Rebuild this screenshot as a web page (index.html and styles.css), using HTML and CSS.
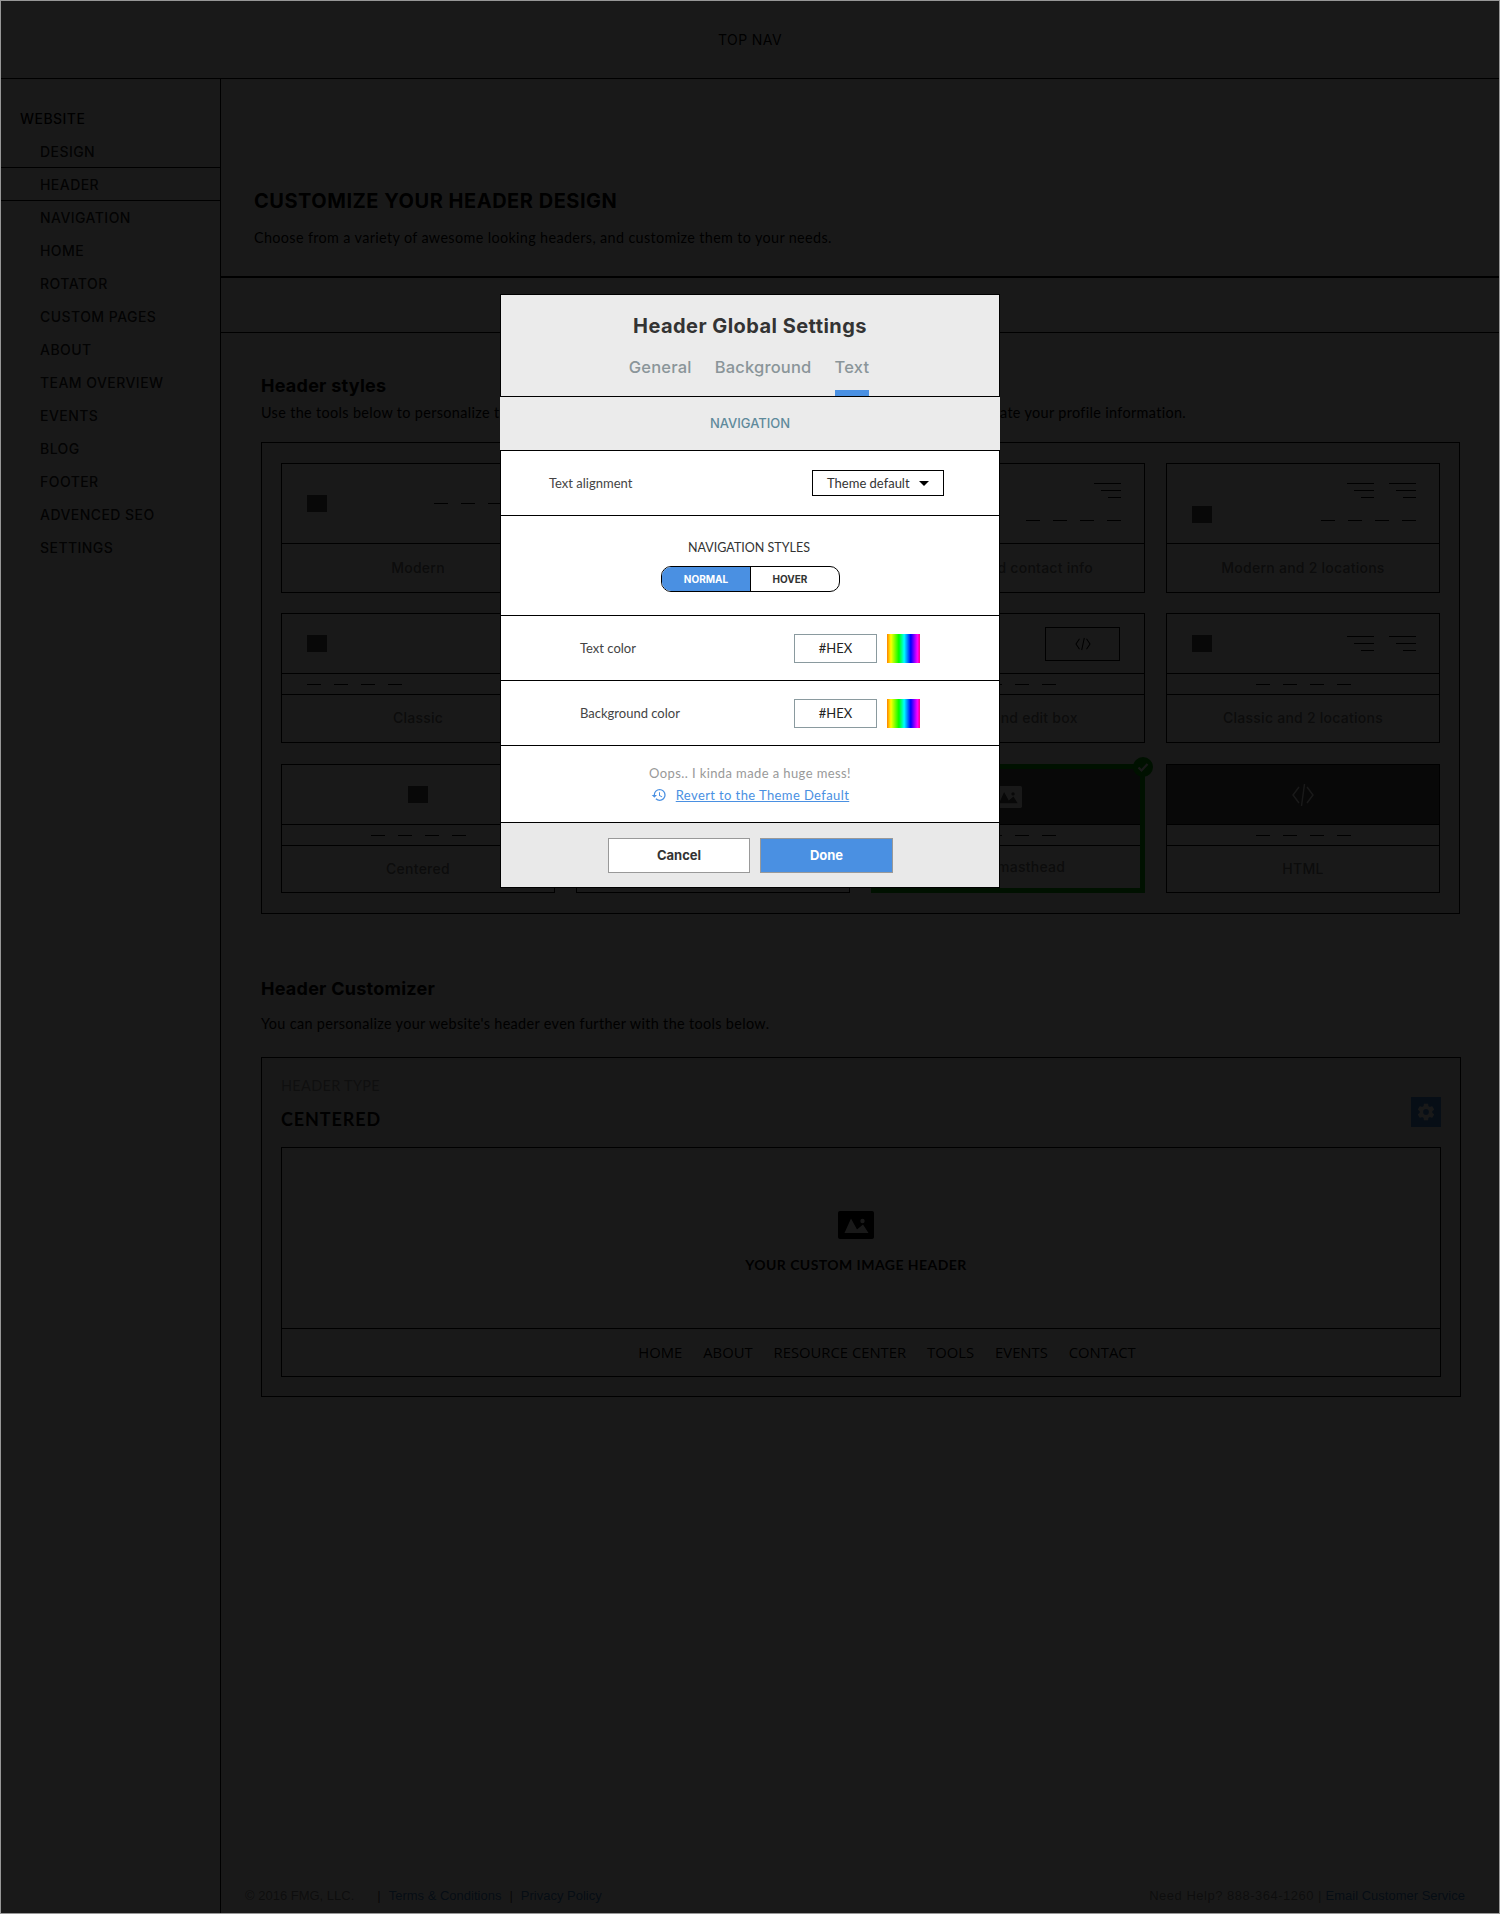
FILE: index.html
```html
<!DOCTYPE html>
<html lang="en">
<head>
<meta charset="utf-8">
<title>Header Global Settings</title>
<link rel="stylesheet" href="styles.css">
</head>
<body>
<header class="topnav">TOP NAV</header>
<div class="layout">
  <nav class="sidebar">
    <div class="side-item side-root">WEBSITE</div>
    <div class="side-item">DESIGN</div>
    <div class="side-item active">HEADER</div>
    <div class="side-item">NAVIGATION</div>
    <div class="side-item">HOME</div>
    <div class="side-item">ROTATOR</div>
    <div class="side-item">CUSTOM PAGES</div>
    <div class="side-item">ABOUT</div>
    <div class="side-item">TEAM OVERVIEW</div>
    <div class="side-item">EVENTS</div>
    <div class="side-item">BLOG</div>
    <div class="side-item">FOOTER</div>
    <div class="side-item">ADVENCED SEO</div>
    <div class="side-item">SETTINGS</div>
  </nav>
  <main class="main">
    <section class="page-head">
      <h1>CUSTOMIZE YOUR HEADER DESIGN</h1>
      <p>Choose from a variety of awesome looking headers, and customize them to your needs.</p>
    </section>
    <div class="subbar"></div>
    <section class="panel panel-styles">
      <h2>Header styles</h2>
      <p class="panel-sub">Use the tools below to personalize the look and feel of your website's header and navigation, and then fully update your profile information.</p>
      <div class="style-box">
        <div class="style-grid">
          <div class="card">
            <div class="thumb tall row-between"><span class="logo"></span><span class="dashes"><i></i><i></i><i></i><i></i></span></div>
            <div class="label">Modern</div>
          </div>
          <div class="card">
            <div class="thumb tall row-between"><span class="logo"></span><span class="dashes"><i></i><i></i><i></i><i></i></span></div>
            <div class="label">Modern and edit box</div>
          </div>
          <div class="card">
            <div class="thumb tall stacked">
              <div class="stack-top"><span class="lines"><i></i><i></i><i></i></span></div>
              <div class="stack-bottom"><span class="logo"></span><span class="dashes"><i></i><i></i><i></i><i></i></span></div>
            </div>
            <div class="label">Modern and contact info</div>
          </div>
          <div class="card">
            <div class="thumb tall stacked">
              <div class="stack-top"><span class="lines"><i></i><i></i><i></i></span><span class="lines"><i></i><i></i><i></i></span></div>
              <div class="stack-bottom"><span class="logo"></span><span class="dashes"><i></i><i></i><i></i><i></i></span></div>
            </div>
            <div class="label">Modern and 2 locations</div>
          </div>

          <div class="card">
            <div class="thumb row-between"><span class="logo"></span></div>
            <div class="strip strip-left"><span class="dashes"><i></i><i></i><i></i><i></i></span></div>
            <div class="label">Classic</div>
          </div>
          <div class="card">
            <div class="thumb row-between"><span class="logo"></span><span class="lines"><i></i><i></i><i></i></span></div>
            <div class="strip"><span class="dashes"><i></i><i></i><i></i><i></i></span></div>
            <div class="label">Classic and contact info</div>
          </div>
          <div class="card">
            <div class="thumb row-between">
              <span class="logo"></span>
              <span class="edit-box"><svg class="code-icon" viewBox="0 0 18 16"><path d="M5 2 1 8l4 6M13 2l4 6-4 6M10.500 1 7.500 15"/></svg></span>
            </div>
            <div class="strip"><span class="dashes"><i></i><i></i><i></i><i></i></span></div>
            <div class="label">Classic and edit box</div>
          </div>
          <div class="card">
            <div class="thumb row-between"><span class="logo"></span><span class="loc-pair"><span class="lines"><i></i><i></i><i></i></span><span class="lines"><i></i><i></i><i></i></span></span></div>
            <div class="strip"><span class="dashes"><i></i><i></i><i></i><i></i></span></div>
            <div class="label">Classic and 2 locations</div>
          </div>

          <div class="card card-r3">
            <div class="thumb thumb-center"><span class="logo"></span></div>
            <div class="strip"><span class="dashes"><i></i><i></i><i></i><i></i></span></div>
            <div class="label">Centered</div>
          </div>
          <div class="card card-r3">
            <div class="thumb thumb-center"><span class="logo"></span></div>
            <div class="strip"><span class="dashes"><i></i><i></i><i></i><i></i></span></div>
            <div class="label">Centered and contact info</div>
          </div>
          <div class="card card-r3 selected">
            <div class="thumb thumb-center thumb-dark">
              <svg class="img-icon img-icon-small" viewBox="0 0 36 28"><path class="img-bg" d="M2 0h32a2 2 0 0 1 2 2v24a2 2 0 0 1-2 2H2a2 2 0 0 1-2-2V2a2 2 0 0 1 2-2z"/><path class="img-fg" d="M6.500 22 13 7.500l6 11 6-5 5.500 8.500z"/><circle class="img-fg" cx="24.500" cy="10" r="2.200"/></svg>
            </div>
            <div class="strip"><span class="dashes"><i></i><i></i><i></i><i></i></span></div>
            <div class="label">Image masthead</div>
            <span class="badge"><svg viewBox="0 0 20 20"><path d="m5.500 10.500 3 3 6-6.500"/></svg></span>
          </div>
          <div class="card card-r3">
            <div class="thumb thumb-center thumb-dark">
              <svg class="code-icon code-icon-big" viewBox="0 0 22 24"><path d="M7 4 1 12l6 8M15 4l6 8-6 8M12.500 1 9.500 23"/></svg>
            </div>
            <div class="strip"><span class="dashes"><i></i><i></i><i></i><i></i></span></div>
            <div class="label">HTML</div>
          </div>
        </div>
      </div>
    </section>

    <section class="panel panel-custom">
      <h2>Header Customizer</h2>
      <p class="panel-sub panel-sub-gap">You can personalize your website's header even further with the tools below.</p>
      <div class="custom-box">
        <div class="custom-head">
          <div>
            <div class="type-label">HEADER TYPE</div>
            <div class="type-name">CENTERED</div>
          </div>
          <span class="gear-btn"><svg viewBox="0 0 24 24"><path d="M19.430 12.980c.04-.32.070-.64.070-.98s-.03-.66-.07-.98l2.110-1.650c.19-.15.240-.42.120-.64l-2-3.460c-.12-.22-.39-.3-.61-.22l-2.490 1c-.52-.4-1.080-.73-1.690-.98l-.38-2.650A.488.488 0 0 0 14 2h-4c-.25 0-.46.18-.49.420l-.38 2.650c-.61.25-1.170.59-1.690.98l-2.490-1c-.23-.09-.49 0-.61.220l-2 3.460c-.13.220-.07.49.120.64l2.110 1.650c-.04.32-.07.65-.07.980s.03.66.07.980l-2.110 1.650c-.19.150-.24.420-.12.640l2 3.460c.12.220.39.300.61.220l2.490-1c.52.400 1.080.730 1.690.980l.38 2.650c.03.240.24.420.49.420h4c.25 0 .46-.18.49-.42l.38-2.650c.61-.25 1.170-.59 1.690-.98l2.490 1c.23.090.49 0 .61-.22l2-3.460c.12-.22.070-.49-.12-.64l-2.110-1.650zM12 15.500a3.500 3.500 0 1 1 0-7 3.500 3.500 0 0 1 0 7z"/></svg></span>
        </div>
        <div class="preview">
          <div class="preview-image">
            <svg class="img-icon" viewBox="0 0 36 28"><path class="img-bg" d="M2 0h32a2 2 0 0 1 2 2v24a2 2 0 0 1-2 2H2a2 2 0 0 1-2-2V2a2 2 0 0 1 2-2z"/><path class="img-fg" d="M6.500 22 13 7.500l6 11 6-5 5.500 8.500z"/><circle class="img-fg" cx="24.500" cy="10" r="2.200"/></svg>
            <div class="preview-title">YOUR CUSTOM IMAGE HEADER</div>
          </div>
          <div class="preview-nav">
            <span>HOME</span><span>ABOUT</span><span>RESOURCE CENTER</span><span>TOOLS</span><span>EVENTS</span><span>CONTACT</span>
          </div>
        </div>
      </div>
    </section>

    <footer class="page-foot">
      <div class="foot-left"><span class="copy">© 2016 FMG, LLC.</span><span class="sep">|</span><a>Terms &amp; Conditions</a><span class="sep">|</span><a>Privacy Policy</a></div>
      <div class="foot-right"><span class="copy help">Need Help? 888-364-1260 |</span> <a>Email Customer Service</a></div>
    </footer>
  </main>
</div>

<div class="overlay"></div>

<div class="modal">
  <div class="m-head">
    <div class="m-title">Header Global Settings</div>
    <div class="m-tabs">
      <span class="m-tab">General</span>
      <span class="m-tab">Background</span>
      <span class="m-tab is-active">Text</span>
    </div>
  </div>
  <div class="m-section">NAVIGATION</div>
  <div class="m-row m-align">
    <span class="m-label">Text alignment</span>
    <span class="m-select">Theme default<i class="caret"></i></span>
  </div>
  <div class="m-styles">
    <div class="m-styles-title">NAVIGATION STYLES</div>
    <div class="toggle"><span class="toggle-on">NORMAL</span><span class="toggle-off">HOVER</span></div>
  </div>
  <div class="m-row m-color">
    <span class="m-label">Text color</span>
    <span class="color-tools"><span class="hex">#HEX</span><span class="rainbow"></span></span>
  </div>
  <div class="m-row m-color">
    <span class="m-label">Background color</span>
    <span class="color-tools"><span class="hex">#HEX</span><span class="rainbow"></span></span>
  </div>
  <div class="m-revert">
    <div class="oops">Oops.. I kinda made a huge mess!</div>
    <div class="revert-line">
      <svg class="history" viewBox="0 0 24 24"><path d="M13 3a9 9 0 0 0-9 9H1l3.890 3.890.07.14L9 12H6c0-3.870 3.130-7 7-7s7 3.130 7 7-3.130 7-7 7c-1.930 0-3.680-.79-4.940-2.060l-1.420 1.420A8.954 8.954 0 0 0 13 21a9 9 0 0 0 0-18zm-1 5v5l4.280 2.540.72-1.210-3.500-2.080V8H12z"/></svg>
      <a class="revert-link">Revert to the Theme Default</a>
    </div>
  </div>
  <div class="m-foot">
    <span class="btn btn-cancel">Cancel</span>
    <span class="btn btn-done">Done</span>
  </div>
</div>
</body>
</html>
```

FILE: styles.css
```css
* { box-sizing: border-box; }
html, body { margin: 0; padding: 0; }
body {
  position: relative;
  width: 1500px;
  height: 1914px;
  background: #fff;
  font-family: "Lato", "Open Sans", sans-serif;
  color: #000;
  overflow: hidden;
}
body::after {
  content: "";
  position: absolute;
  inset: 0;
  border: 1px solid #979797;
  z-index: 5;
  pointer-events: none;
}

.overlay {
  position: absolute;
  inset: 0;
  background: rgba(0, 0, 0, 0.9);
  z-index: 2;
}

/* ---------- page below the overlay ---------- */
.topnav {
  height: 79px;
  padding-top: 1px;
  display: flex;
  align-items: center;
  justify-content: center;
  border-bottom: 1px solid #000;
  font: 400 14px/1 "Inter", sans-serif;
  letter-spacing: .4px;
}
.layout { display: flex; height: 1835px; }
.sidebar {
  width: 221px;
  flex: none;
  padding: 23px 0 0 1px;
  border-right: 1px solid #000;
  background: #fff;
}
.side-item {
  height: 33px;
  padding-left: 39px;
  padding-top: 1px;
  display: flex;
  align-items: center;
  font: 500 14px/1 "Inter", sans-serif;
  letter-spacing: .45px;
  color: #222;
}
.side-root { padding-left: 19px; color: #000; }
.side-item.active {
  height: 34px;
  margin-top: -1px;
  border-top: 1px solid #000;
  border-bottom: 1px solid #000;
}

.main {
  flex: 1;
  display: flex;
  flex-direction: column;
  background: #fff;
  min-width: 0;
}
.page-head {
  height: 199px;
  flex: none;
  padding: 109px 0 0 33px;
  background: #fff;
  border-bottom: 2px solid #000;
}
.page-head h1 {
  margin: 0;
  font: 700 20px/26px "Inter", sans-serif;
  letter-spacing: .52px;
}
.page-head p {
  margin: 14px 0 0;
  font: 400 14.400px/20px "Lato", sans-serif;
  letter-spacing: .35px;
}
.subbar {
  height: 55px;
  flex: none;
  background: #fff;
  border-bottom: 1px solid #000;
}
.panel {
  margin-left: 19px;
  width: 1240px;
  background: #f7f7f7;
  flex: none;
  padding-left: 21px;
  padding-right: 20px;
}
.panel h2 {
  margin: 0;
  font: 700 18px/24px "Inter", sans-serif;
  letter-spacing: .25px;
}
.panel-sub {
  margin: 5px 0 0;
  font: 400 14.400px/20px "Lato", sans-serif;
  letter-spacing: .35px;
  white-space: nowrap;
}
.panel-styles { margin-top: 21px; padding-top: 20px; padding-bottom: 22px; }
.panel-custom { margin-top: 19px; padding-top: 22px; padding-bottom: 20px; }
.panel-sub-gap { margin-top: 13px; }

.style-box {
  margin-top: 19px;
  height: 472px;
  border: 1px solid #000;
  background: #f3f3f3;
  padding: 20px 19px;
}
.style-grid {
  display: grid;
  grid-template-columns: repeat(4, 274px);
  column-gap: 21px;
  row-gap: 20px;
}
.card {
  position: relative;
  height: 130px;
  border: 1px solid #000;
  display: flex;
  flex-direction: column;
  background: #fff;
}
.card-r3 { height: 129px; margin-top: 1px; }
.thumb {
  height: 60px;
  flex: none;
  border-bottom: 1px solid #000;
  padding: 0 25px;
}
.thumb.tall { height: 80px; }
.row-between { display: flex; align-items: center; justify-content: space-between; }
.thumb-center { display: flex; align-items: center; justify-content: center; }
.thumb-dark { background: #505050; }
.stacked { display: flex; flex-direction: column; justify-content: space-between; padding: 19px 23px 20px 25px; }
.stack-top { display: flex; justify-content: flex-end; gap: 15px; }
.stack-bottom { display: flex; align-items: flex-end; justify-content: space-between; }
.stack-bottom .dashes { margin-bottom: 2px; }
.logo { display: block; width: 20px; height: 17px; background: #505050; }
.dashes { display: flex; gap: 13px; }
.dashes i { display: block; width: 14px; height: 1px; background: #000; }
.lines { display: flex; flex-direction: column; align-items: flex-end; gap: 6px; }
.lines i { display: block; height: 1px; background: #000; width: 27px; }
.lines i:nth-child(2) { width: 20px; }
.lines i:nth-child(3) { width: 13px; }
.loc-pair { display: flex; gap: 15px; margin-right: -2px; }
.edit-box {
  width: 75px;
  height: 34px;
  margin-right: -1px;
  border: 1px solid #000;
  display: flex;
  align-items: center;
  justify-content: center;
}
.code-icon { width: 16px; height: 14px; fill: none; stroke: #000; stroke-width: 1.200; }
.code-icon-big { width: 22px; height: 24px; stroke: #fff; stroke-width: 1.400; }
.strip {
  height: 21px;
  flex: none;
  border-bottom: 1px solid #000;
  display: flex;
  align-items: center;
  justify-content: center;
}
.strip-left { justify-content: flex-start; padding-left: 25px; }
.label {
  flex: 1;
  padding-bottom: 1px;
  display: flex;
  align-items: center;
  justify-content: center;
  font: 500 14px/1 "Inter", sans-serif;
  letter-spacing: .25px;
  color: #777;
}
.selected { border: 5px solid #00a800; }
.selected .thumb { height: 56px; }
.badge {
  position: absolute;
  top: -12px;
  right: -13px;
  width: 20px;
  height: 20px;
  border-radius: 50%;
  background: #00a800;
}
.badge svg { display: block; width: 20px; height: 20px; fill: none; stroke: #fff; stroke-width: 2.200; }

.img-icon { display: block; width: 36px; height: 28px; }
.img-icon-small { width: 28px; height: 24px; }
.img-bg { fill: #000; }
.img-fg { fill: #fff; }
.img-icon-small .img-bg { fill: #fff; }
.img-icon-small .img-fg { fill: #505050; }

.custom-box {
  margin-top: 23px;
  margin-right: -1px;
  height: 340px;
  border: 1px solid #000;
  background: #f3f3f3;
  padding: 18px 19px 20px;
}
.custom-head {
  display: flex;
  justify-content: space-between;
  align-items: flex-end;
}
.type-label { font: 400 14.500px/20px "Lato", sans-serif; color: #999; letter-spacing: .3px; }
.type-name { margin-top: 11px; font: 700 18px/24px "Lato", sans-serif; letter-spacing: .9px; }
.gear-btn {
  width: 30px;
  height: 30px;
  margin-bottom: 4px;
  background: #4a90e2;
  display: flex;
  align-items: center;
  justify-content: center;
}
.gear-btn svg { display: block; width: 20px; height: 20px; fill: #fff; }
.preview { margin-top: 16px; height: 230px; border: 1px solid #000; background: #fff; display: flex; flex-direction: column; }
.preview-image {
  height: 181px;
  flex: none;
  border-bottom: 1px solid #000;
  display: flex;
  flex-direction: column;
  align-items: center;
  padding: 63px 10px 0 0;
}
.preview-title { margin-top: 16px; font: 700 14px/20px "Lato", sans-serif; letter-spacing: .45px; }
.preview-nav {
  flex: 1;
  display: flex;
  align-items: center;
  justify-content: center;
  gap: 21px;
  padding-left: 52px;
  font: 400 14.800px/1 "Open Sans", sans-serif;
}
.page-foot {
  margin-top: auto;
  height: 34px;
  flex: none;
  padding: 6px 35px 0 24px;
  display: flex;
  justify-content: space-between;
  align-items: flex-start;
  font: 400 13px/20px "Liberation Sans", sans-serif;
}
.copy { color: #888; }
.help { letter-spacing: .5px; }
.page-foot a { color: #3a80c8; }
.foot-left { display: flex; }
.foot-left .sep { margin: 0 8px; color: #555; }
.foot-left .sep:nth-of-type(2) { margin-left: 23px; }

/* ---------- modal ---------- */
.modal {
  position: absolute;
  left: 500px;
  top: 294px;
  width: 500px;
  height: 594px;
  border: 1px solid #000;
  background: #fff;
  z-index: 3;
  color: #333;
}
.m-head {
  height: 102px;
  padding-top: 17px;
  background: #ebebeb;
  border-bottom: 1px solid #000;
}
.m-title {
  text-align: center;
  font: 700 20px/28px "Inter", sans-serif;
  letter-spacing: .45px;
  color: #333;
}
.m-tabs {
  margin-top: 16px;
  padding-right: 2px;
  display: flex;
  justify-content: center;
  gap: 23px;
}
.m-tab {
  height: 40px;
  font: 500 16.500px/22px "Inter", sans-serif;
  letter-spacing: .2px;
  color: #8a9599;
}
.m-tab.is-active { border-bottom: 6px solid #4a90e2; height: 40px; }
.m-section {
  margin: 0 -1px;
  height: 54px;
  background: #ebebeb;
  border-bottom: 1px solid #000;
  display: flex;
  align-items: center;
  justify-content: center;
  font: 500 13px/1 "Inter", sans-serif;
  color: #5f8a9b;
}
.m-row {
  height: 65px;
  border-bottom: 1px solid #000;
  display: flex;
  align-items: center;
  justify-content: space-between;
}
.m-align { padding: 0 55px 0 48px; }
.m-color { padding: 0 79px 0 79px; }
.m-label { font: 400 13px/1 "Lato", sans-serif; color: #444; }
.m-select {
  width: 132px;
  height: 26px;
  border: 1px solid #000;
  padding: 0 14px;
  display: flex;
  align-items: center;
  justify-content: space-between;
  font: 400 13px/1 "Lato", sans-serif;
  color: #333;
}
.caret {
  display: block;
  width: 0;
  height: 0;
  border-left: 5px solid transparent;
  border-right: 5px solid transparent;
  border-top: 5px solid #000;
}
.m-styles {
  height: 100px;
  border-bottom: 1px solid #000;
  display: flex;
  flex-direction: column;
  align-items: center;
  padding-top: 22px;
}
.m-styles-title { padding-right: 2px; font: 400 12.500px/20px "Lato", sans-serif; color: #333; }
.toggle {
  margin-top: 8px;
  margin-left: 1px;
  width: 179px;
  height: 26px;
  border: 1px solid #000;
  border-radius: 10px;
  overflow: hidden;
  display: flex;
  font: 700 10px/24px "Inter", sans-serif;
  text-align: center;
}
.toggle-on { width: 89px; background: #4a90e2; color: #fff; border-right: 1px solid #000; }
.toggle-off { flex: 1; padding-right: 10px; color: #333; }
.color-tools { display: flex; gap: 10px; }
.hex {
  width: 83px;
  height: 29px;
  border: 1px solid #8a9a9f;
  display: flex;
  align-items: center;
  justify-content: center;
  font: 400 13px/1 "Lato", sans-serif;
  color: #222;
}
.rainbow {
  width: 33px;
  height: 29px;
  background: linear-gradient(90deg, #ff8000 0%, #ffff00 12%, #00ff00 36%, #00ffff 52%, #0000ff 72%, #ff00ff 92%, #ff0080 100%);
}
.m-revert {
  height: 77px;
  border-bottom: 1px solid #000;
  padding-top: 17px;
  display: flex;
  flex-direction: column;
  align-items: center;
}
.oops { font: 400 13px/20px "Lato", sans-serif; letter-spacing: .4px; color: #999; }
.revert-line { margin-top: 2px; display: flex; align-items: center; gap: 9px; }
.history { display: block; width: 16px; height: 16px; fill: #4a90e2; }
.revert-link {
  font: 400 13px/20px "Lato", sans-serif;
  letter-spacing: .4px;
  color: #4a90e2;
  text-decoration: underline;
}
.m-foot {
  height: 64px;
  background: #e9e9e9;
  padding: 15px 0 0 107px;
  display: flex;
  gap: 10px;
}
.btn {
  height: 35px;
  display: flex;
  align-items: center;
  justify-content: center;
  font: 700 13px/1 "Inter", sans-serif;
  border: 1px solid #999;
}
.btn-cancel { width: 142px; background: #fff; color: #333; }
.btn-done { width: 133px; background: #4a90e2; color: #fff; }
```
